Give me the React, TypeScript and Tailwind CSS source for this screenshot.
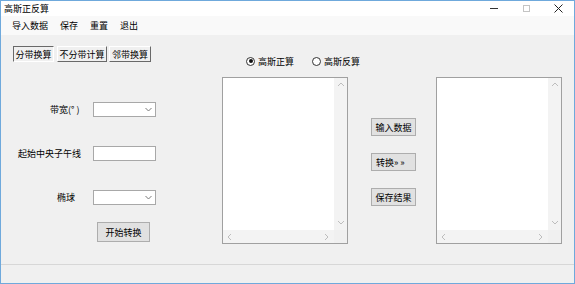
import { ReactNode } from "react";

const font = { fontFamily: '"Noto Sans CJK SC", "Noto Sans", sans-serif' };

function Chevron({ dir, color = "#bdbdbd" }: { dir: "up" | "down" | "left" | "right"; color?: string }) {
  const d = {
    up: "M1 5 L4 2 L7 5",
    down: "M1 2 L4 5 L7 2",
    left: "M5 1 L2 4 L5 7",
    right: "M2 1 L5 4 L2 7",
  }[dir];
  return (
    <svg width="8" height="8" viewBox="0 0 8 8" fill="none" stroke={color} strokeWidth="1">
      <path d={d} />
    </svg>
  );
}

function TextArea() {
  return (
    <div className="w-[126px] h-[167px] border border-[#a0a0a0] bg-white flex flex-col">
      <div className="flex flex-1">
        <div className="flex-1 bg-white" />
        <div className="w-[13px] bg-[#f3f3f3] flex flex-col items-center justify-between py-[3px]">
          <Chevron dir="up" />
          <Chevron dir="down" />
        </div>
      </div>
      <div className="h-[13px] flex bg-[#f3f3f3]">
        <div className="flex-1 flex items-center justify-between px-[3px]">
          <Chevron dir="left" />
          <Chevron dir="right" />
        </div>
        <div className="w-[13px] bg-[#f0f0f0]" />
      </div>
    </div>
  );
}

function Btn({ children, className = "" }: { children: ReactNode; className?: string }) {
  return (
    <div
      className={`flex items-center justify-center bg-[#e1e1e1] border border-[#adadad] text-[9px] text-black leading-none whitespace-nowrap ${className}`}
    >
      {children}
    </div>
  );
}

function Combo() {
  return (
    <div className="w-[63px] h-[15px] bg-white border border-[#a8a8a8] flex items-center justify-end pr-[3px]">
      <svg width="7" height="5" viewBox="0 0 7 5" fill="none" stroke="#7a7a7a" strokeWidth="1">
        <path d="M0.5 1 L3.5 4 L6.5 1" />
      </svg>
    </div>
  );
}

function Radio({ checked, label }: { checked?: boolean; label: string }) {
  return (
    <div className="flex items-center gap-[3px] shrink-0">
      <div className="w-[9px] h-[9px] rounded-full border border-[#333] bg-white flex items-center justify-center">
        {checked && <div className="w-[4px] h-[4px] rounded-full bg-[#111]" />}
      </div>
      <span className="text-[9px] leading-none whitespace-nowrap">{label}</span>
    </div>
  );
}

export default function App() {
  return (
    <div
      className="w-[575px] h-[284px] flex flex-col border border-[#6fa9dc] bg-[#f0f0f0] text-black overflow-hidden"
      style={font}
    >
      {/* title bar */}
      <div className="h-[15px] bg-white flex items-center justify-between">
        <span className="pl-[3px] text-[9px] leading-none">高斯正反算</span>
        <div className="flex h-full">
          <div className="w-[32px] flex items-center justify-center">
            <div className="w-[8px] h-px bg-[#333]" />
          </div>
          <div className="w-[32px] flex items-center justify-center">
            <div className="w-[7px] h-[7px] border border-[#c4c4c4]" />
          </div>
          <div className="w-[32px] flex items-center justify-center">
            <svg width="9" height="9" viewBox="0 0 9 9" stroke="#222" strokeWidth="1">
              <path d="M0.5 0.5 L8.5 8.5 M8.5 0.5 L0.5 8.5" />
            </svg>
          </div>
        </div>
      </div>

      {/* menu */}
      <div className="h-[19px] bg-[#f9f9f9] flex items-center pl-[5px] text-[9px] leading-none">
        <span className="px-[6px]">导入数据</span>
        <span className="px-[6px]">保存</span>
        <span className="px-[6px]">重置</span>
        <span className="px-[6px]">退出</span>
      </div>

      {/* body */}
      <div className="flex-1 flex items-start">
        {/* left column */}
        <div className="ml-[12px] w-[144px] pt-[11px] flex flex-col">
          <div className="flex items-center text-[9px] leading-none">
            <div className="h-[16px] w-[41px] flex items-center justify-center border border-t-[#696969] border-l-[#696969] border-r-white border-b-white">
              分带换算
            </div>
            <div className="ml-[3px] h-[16px] w-[50px] flex items-center justify-center border border-t-white border-l-white border-r-[#696969] border-b-[#696969]">
              不分带计算
            </div>
            <div className="ml-[2px] h-[16px] w-[42px] flex items-center justify-center border border-t-white border-l-white border-r-[#696969] border-b-[#696969]">
              邻带换算
            </div>
          </div>

          <div className="mt-[40px] flex items-center">
            <div className="w-[80px] pl-[37px] text-[9px] leading-none whitespace-nowrap">带宽(° )</div>
            <Combo />
          </div>
          <div className="mt-[29px] flex items-center">
            <div className="w-[80px] pl-[5px] text-[9px] leading-none whitespace-nowrap">起始中央子午线</div>
            <div className="w-[63px] h-[15px] bg-white border border-[#a8a8a8]" />
          </div>
          <div className="mt-[29px] flex items-center">
            <div className="w-[80px] pl-[44px] text-[9px] leading-none whitespace-nowrap">椭球</div>
            <Combo />
          </div>
          <Btn className="mt-[17px] ml-[84px] w-[53px] h-[20px]">开始转换</Btn>
        </div>

        {/* middle column */}
        <div className="ml-[65px] w-[126px] pt-[20px] flex flex-col">
          <div className="h-[12px] pl-[24px] flex items-center gap-[18px]">
            <Radio checked label="高斯正算" />
            <Radio label="高斯反算" />
          </div>
          <div className="mt-[10px]">
            <TextArea />
          </div>
        </div>

        {/* buttons */}
        <div className="ml-[23px] w-[45px] pt-[83px] flex flex-col gap-[17px]">
          <Btn className="w-[45px] h-[18px]">输入数据</Btn>
          <Btn className="w-[45px] h-[18px] justify-start pl-[4px]">转换» »</Btn>
          <Btn className="w-[45px] h-[18px]">保存结果</Btn>
        </div>

        {/* right column */}
        <div className="ml-[20px] pt-[42px]">
          <TextArea />
        </div>
      </div>

      {/* status bar */}
      <div className="h-[19px] border-t border-[#d7d7d7] bg-[#f0f0f0]" />
    </div>
  );
}
